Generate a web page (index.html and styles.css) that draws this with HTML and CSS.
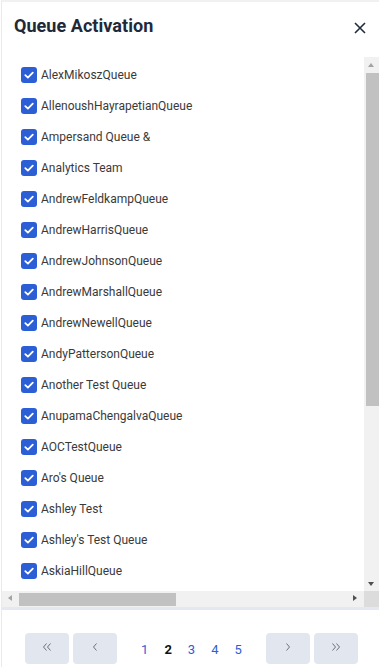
FILE: index.html
```html
<!DOCTYPE html>
<html>
<head>
<meta charset="utf-8">
<link rel="stylesheet" href="styles.css">
</head>
<body>
<div class="panel">
  <div class="header">
    <h1 class="title">Queue Activation</h1>
    <svg class="close" width="12" height="12" viewBox="0 0 12 12"><path d="M1 1L11 11M11 1L1 11" stroke="#1f2d3d" stroke-width="1.6" fill="none"/></svg>
  </div>
  <div class="listbox">
    <div class="listrow">
      <div class="viewport">
        <ul class="list" id="list"></ul>
      </div>
      <div class="vscroll">
        <div class="arrow up"></div>
        <div class="vtrack"><div class="vthumb"></div></div>
        <div class="arrow down"></div>
      </div>
    </div>
    <div class="hscroll">
      <div class="harrow left"></div>
      <div class="htrack"><div class="hthumb"></div></div>
      <div class="harrow right"></div>
      <div class="corner"></div>
    </div>
  </div>
  <div class="footer">
    <button class="pbtn"><svg width="10" height="10" viewBox="0 0 10 10"><path d="M4.5 1.5L1.5 5L4.5 8.5M8.5 1.5L5.5 5L8.5 8.5" stroke="#6b7280" stroke-width="1" fill="none"/></svg></button>
    <button class="pbtn"><svg width="10" height="10" viewBox="0 0 10 10"><path d="M6.5 1.5L3.5 5L6.5 8.5" stroke="#6b7280" stroke-width="1" fill="none"/></svg></button>
    <div class="pages">
      <span class="page">1</span>
      <span class="page current">2</span>
      <span class="page">3</span>
      <span class="page">4</span>
      <span class="page">5</span>
    </div>
    <button class="pbtn"><svg width="10" height="10" viewBox="0 0 10 10"><path d="M3.5 1.5L6.5 5L3.5 8.5" stroke="#6b7280" stroke-width="1" fill="none"/></svg></button>
    <button class="pbtn"><svg width="10" height="10" viewBox="0 0 10 10"><path d="M1.5 1.5L4.5 5L1.5 8.5M5.5 1.5L8.5 5L5.5 8.5" stroke="#6b7280" stroke-width="1" fill="none"/></svg></button>
  </div>
</div>
<script>
var names=["AlexMikoszQueue","AllenoushHayrapetianQueue","Ampersand Queue &","Analytics Team","AndrewFeldkampQueue","AndrewHarrisQueue","AndrewJohnsonQueue","AndrewMarshallQueue","AndrewNewellQueue","AndyPattersonQueue","Another Test Queue","AnupamaChengalvaQueue","AOCTestQueue","Aro's Queue","Ashley Test","Ashley's Test Queue","AskiaHillQueue"];
var ul=document.getElementById('list');
names.forEach(function(n){
  var li=document.createElement('li');li.className='item';
  li.innerHTML='<span class="cb"><svg width="12" height="12" viewBox="0 0 12 12"><path d="M2.3 6.2L4.9 8.6L9.8 3.6" stroke="#fff" stroke-width="1.8" fill="none" stroke-linecap="round" stroke-linejoin="round"/></svg></span><span class="label"></span>';
  li.querySelector('.label').textContent=n;
  ul.appendChild(li);
});
</script>
</body>
</html>
```
FILE: styles.css
```css
html, body { margin: 0; padding: 0; background: #fff; }
body { font-family: Roboto, "Noto Sans", Arial, sans-serif; width: 379px; height: 669px; overflow: hidden; }
.panel { border-top: 2px solid #f1f1f1; border-left: 1px solid #e9e9ee; margin-left: 1px; height: 667px; display: flex; flex-direction: column; box-sizing: border-box; }
.header { height: 55px; display: flex; align-items: flex-start; justify-content: space-between; box-sizing: border-box; padding: 13px 13px 0 12px; }
.title { margin: 0; font-size: 18px; font-weight: 700; color: #1e293b; line-height: 22px; letter-spacing: 0.05px; }
.close { margin-top: 7px; }
.listbox { display: flex; flex-direction: column; }
.listrow { display: flex; height: 534px; }
.viewport { flex: 1; overflow: hidden; }
.list { list-style: none; margin: 0; padding: 2.5px 0 0 19px; }
.item { height: 31px; display: flex; align-items: center; }
.cb { width: 16px; height: 16px; border-radius: 3px; background: #2c5fd6; display: flex; align-items: center; justify-content: center; margin-right: 4px; flex: none; }
.label { font-size: 12px; color: #3a3a3a; white-space: nowrap; }
.vscroll { width: 15px; background: #f1f1f1; display: flex; flex-direction: column; }
.arrow { height: 15px; position: relative; }
.arrow.up::after { content: ""; position: absolute; left: 4px; top: 6px; border-left: 3.5px solid transparent; border-right: 3.5px solid transparent; border-bottom: 4px solid #a3a3a3; }
.arrow.down::after { content: ""; position: absolute; left: 4px; top: 6px; border-left: 3.5px solid transparent; border-right: 3.5px solid transparent; border-top: 4px solid #505050; }
.vtrack { flex: 1; padding: 1px 0 0 2px; }
.vthumb { height: 333px; background: #c1c1c1; }
.hscroll { height: 16px; display: flex; background: #f1f1f1; }
.harrow { width: 17px; position: relative; }
.harrow.left::after { content: ""; position: absolute; left: 6px; top: 4px; border-top: 3.5px solid transparent; border-bottom: 3.5px solid transparent; border-right: 4px solid #a3a3a3; }
.harrow.right::after { content: ""; position: absolute; left: 6px; top: 4px; border-top: 3.5px solid transparent; border-bottom: 3.5px solid transparent; border-left: 4px solid #505050; }
.htrack { flex: 1; padding: 2px 0 1px; }
.hthumb { width: 157px; height: 100%; background: #c1c1c1; }
.corner { width: 15px; background: #dcdcdc; }
.footer { border-top: 3px solid #e4e8f0; flex: 1; display: flex; align-items: flex-start; padding: 23px 0 0 23px; box-sizing: border-box; }
.pbtn { width: 44px; height: 31px; border: none; border-radius: 4px; background: #e2e6ee; padding: 0 0 3px; margin-right: 4px; display: flex; align-items: center; justify-content: center; }
.pages { display: flex; width: 145px; padding-left: 20px; box-sizing: border-box; margin-top: 9px; }
.page { width: 23.4px; font-size: 13px; color: #2c5fd6; }
.page.current { color: #111; font-weight: 700; }
```
